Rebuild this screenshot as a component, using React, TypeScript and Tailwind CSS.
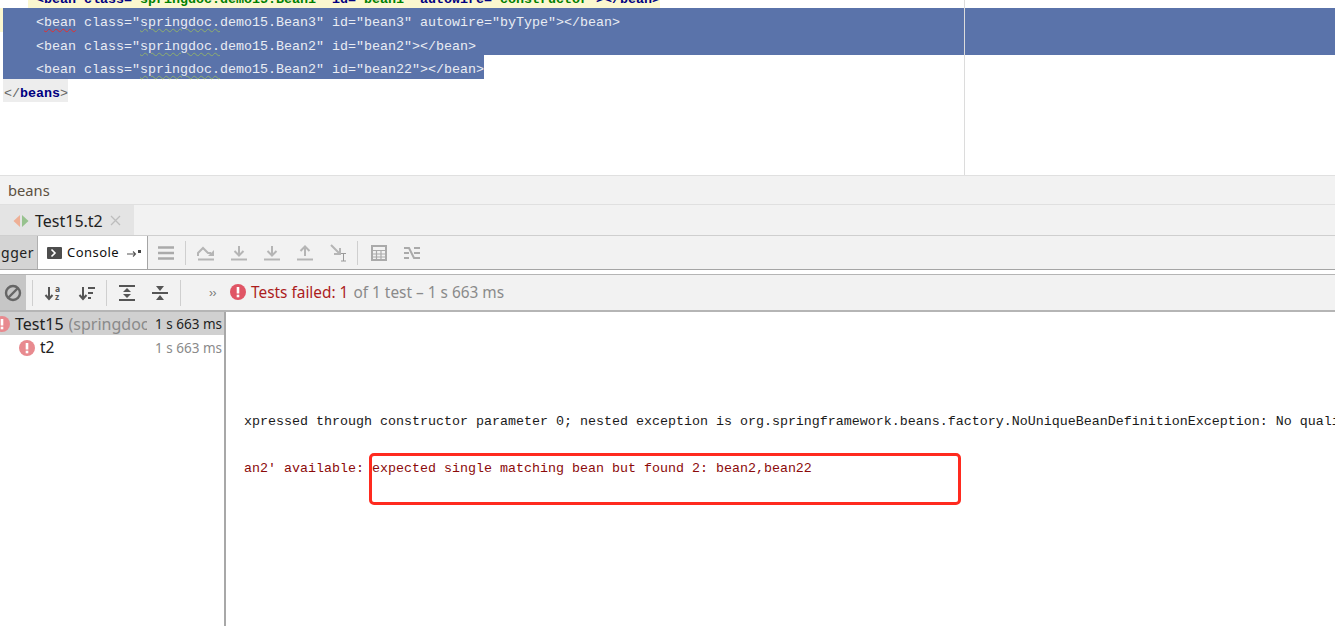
import React from "react";

const Err = ({ s = 16, c = "#e05565" }: { s?: number; c?: string }) => (
  <svg width={s} height={s} viewBox="0 0 16 16" className="shrink-0">
    <circle cx="8" cy="8" r="8" fill={c} />
    <rect x="6.7" y="3" width="2.6" height="6.5" fill="#fff" />
    <rect x="6.7" y="10.7" width="2.6" height="2.6" fill="#fff" />
  </svg>
);

const Ico = ({ children, w = 18 }: { children: React.ReactNode; w?: number }) => (
  <svg width={w} height="18" viewBox="0 0 18 18" className="shrink-0">{children}</svg>
);

const Sep = ({ h = "h-[26px]" }: { h?: string }) => <div className={`w-px bg-[#cfcfcf] shrink-0 ${h}`} />;

function SelLine({ children, full = true }: { children: React.ReactNode; full?: boolean }) {
  return (
    <div className={`h-[23.5px] leading-[29.5px] bg-[#5a73aa] text-[#e9ecf3] pl-[33px] ${full ? "ml-[3px]" : "ml-[3px] w-[481px]"}`}>
      {children}
    </div>
  );
}

const Squig = ({ children, c }: { children: React.ReactNode; c: string }) => (
  <span className="underline decoration-wavy decoration-1 underline-offset-2" style={{ textDecorationColor: c }}>{children}</span>
);

export default function App() {
  const mono = "font-['Liberation_Mono',monospace] text-[13.33px]";
  return (
    <div className="w-[1335px] h-[626px] overflow-hidden relative bg-white flex flex-col font-['Noto_Sans','Open_Sans',sans-serif]">
      {/* editor */}
      <div className={`h-[175px] shrink-0 overflow-hidden relative whitespace-pre ${mono}`}>
        <div className="-mt-[15.5px]">
          <div className="h-[23.5px] leading-[29.5px] ml-[28px] w-[632px] pl-[8px] bg-[#fbf7cf] text-[#000080] font-bold">
            {"<bean class="}<span className="text-[#008000]">"springdoc.demo15.Bean1"</span>{" id="}<span className="text-[#008000]">"bean1"</span>{" autowire="}<span className="text-[#008000]">"constructor"</span>{"></bean>"}
          </div>
          <div className="bg-[#fbf7cf]">
            <SelLine>{"<"}<Squig c="#e03030">bean</Squig>{" class=\""}<Squig c="#8fae6c">springdoc.</Squig>{"demo15.Bean3\" id=\"bean3\" autowire=\"byType\"></bean>"}</SelLine>
          </div>
          <SelLine>{"<bean class=\""}<Squig c="#8fae6c">springdoc.</Squig>{"demo15.Bean2\" id=\"bean2\"></bean>"}</SelLine>
          <SelLine full={false}>{"<bean class=\""}<Squig c="#8fae6c">springdoc.</Squig>{"demo15.Bean2\" id=\"bean22\"></bean>"}</SelLine>
          <div className="h-[23.5px] leading-[29.5px] ml-[3px] w-[65px] bg-[#ededed] text-[#000080] font-bold pl-[1px]">
            <span className="text-[#666] font-normal">{"</"}</span>beans<span className="text-[#666] font-normal">{">"}</span>
          </div>
        </div>
        <div className="absolute left-[964px] top-0 bottom-0 w-px bg-[#dcdcdc]" />
      </div>

      {/* breadcrumb */}
      <div className="h-[30px] shrink-0 bg-[#f2f2f2] border-t border-b border-[#e0e0e0] pl-[8px] flex items-center text-[14.7px] text-[#5c5040]">beans</div>

      {/* run tab */}
      <div className="h-[31px] shrink-0 bg-[#f2f2f2] border-b border-[#cfcfcf]">
        <div className="w-[134px] h-full bg-[#e4e4e4] flex items-center pl-[13px] pt-[1px] text-[16px] text-[#222]">
          <svg width="16" height="14" viewBox="0 0 16 14" className="shrink-0">
            <path d="M7 1 L0.5 7 L7 13 Z" fill="#eeaf95" />
            <path d="M9 1 L15.5 7 L9 13 Z" fill="#97c28e" />
          </svg>
          <span className="ml-[6px]">Test15.t2</span>
          <svg width="11" height="11" viewBox="0 0 11 11" className="ml-[7px]"><path d="M1 1 L10 10 M10 1 L1 10" stroke="#bdbdbd" strokeWidth="1.3" /></svg>
        </div>
      </div>

      {/* tool tabs */}
      <div className="h-[34px] shrink-0 bg-[#f2f2f2] border-b border-[#a5a5a5] flex items-stretch">
        <div className="w-[38px] bg-[#d4d4d4] border-r border-[#b0b0b0] flex items-center justify-end pr-[3px] text-[14px] text-[#222] tracking-[0.5px] overflow-hidden whitespace-nowrap">ugger</div>
        <div className="w-[110px] bg-white border-r border-[#a5a5a5] flex items-center pl-[9px] text-[13px] text-[#111] tracking-[0.45px] shrink-0">
          <svg width="15" height="12" viewBox="0 0 15 12" className="shrink-0"><rect width="15" height="12" rx="1" fill="#4d4d4d" /><path d="M4.5 2.5 L8 6 L4.5 9.5" stroke="#fff" strokeWidth="1.6" fill="none" /></svg>
          <span className="ml-[5px]">Console</span>
          <svg width="16" height="10" viewBox="0 0 16 10" className="ml-[8px]"><path d="M0 6 H8 M6 3.5 L8.5 6 L6 8.5" stroke="#555" strokeWidth="1.1" fill="none" /><rect x="11" y="2" width="3" height="3" fill="#444" /></svg>
        </div>
        <div className="flex items-center pl-[9px] gap-[10px]">
          <Ico><path d="M1 3.5 H17 M1 9 H17 M1 14.5 H17" stroke="#aaa" strokeWidth="2.4" /></Ico>
          <Sep h="h-[24px]" />
          <div className="flex items-center gap-[15px] ml-[1px]">
            <Ico><path d="M1 15.5 H17" stroke="#b5b5b5" strokeWidth="2" /><path d="M1 12 V9 L6 4 L11 9 H14" stroke="#b5b5b5" strokeWidth="2" fill="none" /><path d="M11 12 H17 V6 Z" fill="#b5b5b5" /></Ico>
            <Ico><path d="M1 15.5 H17 M9 2 V11 M4.5 7 L9 11.5 L13.5 7" stroke="#b5b5b5" strokeWidth="2" fill="none" /></Ico>
            <Ico><path d="M1 15.5 H17 M9 2 V11 M4.5 7 L9 11.5 L13.5 7" stroke="#b5b5b5" strokeWidth="2" fill="none" /></Ico>
            <Ico><path d="M1 15.5 H17 M9 12 V3 M4.5 7 L9 2.5 L13.5 7" stroke="#b5b5b5" strokeWidth="2" fill="none" /></Ico>
            <Ico><path d="M2 1 L11 10 M5 10 H11 V4" stroke="#b5b5b5" strokeWidth="2" fill="none" /><path d="M12 9.5 H17 M14.5 9.5 V17 M12 17 H17" stroke="#999" strokeWidth="1" /></Ico>
          </div>
          <Sep h="h-[24px]" />
          <div className="flex items-center gap-[15px] ml-[2px]">
            <Ico><rect x="2" y="2" width="14" height="14" fill="none" stroke="#aaa" strokeWidth="2" /><path d="M2 6.5 H16 M2 10 H16 M2 13 H16 M6.5 6 V16 M11 6 V16" stroke="#aaa" strokeWidth="1.2" /></Ico>
            <Ico><path d="M1 4 H6 L11 14 H17 M1 14 H6 M11 4 H17 M1 9 H6 M11 9 H17" stroke="#aaa" strokeWidth="2" fill="none" /></Ico>
          </div>
        </div>
      </div>

      {/* gap */}
      <div className="h-[4px] shrink-0 bg-white" />

      {/* test toolbar */}
      <div className="h-[38px] shrink-0 bg-[#f2f2f2] border-t border-[#b5b5b5] border-b-2 border-b-[#b5b5b5] flex items-center text-[15.4px]">
        <div className="w-[26px] h-full bg-[#c6c6c6] flex items-center justify-center shrink-0">
          <svg width="18" height="18" viewBox="0 0 18 18"><circle cx="9" cy="9" r="7" fill="none" stroke="#666" strokeWidth="2.4" /><path d="M4 14 L14 4" stroke="#666" strokeWidth="2.4" /></svg>
        </div>
        <div className="ml-[6px]"><Sep /></div>
        <div className="ml-[11px] flex items-center gap-[16px]">
          <Ico><path d="M5 3 V15 M1.5 11 L5 15 L8.5 11" stroke="#555" strokeWidth="2" fill="none" /><text x="11" y="8" fontSize="8.5" fill="#555" fontWeight="700">a</text><text x="11" y="16" fontSize="8.5" fill="#555" fontWeight="700">z</text></Ico>
          <Ico><path d="M5 3 V15 M1.5 11 L5 15 L8.5 11" stroke="#555" strokeWidth="2" fill="none" /><path d="M10 4 H17 M10 9 H15 M10 14 H13" stroke="#555" strokeWidth="2" /></Ico>
        </div>
        <div className="ml-[10px]"><Sep /></div>
        <div className="ml-[11px] flex items-center gap-[15px]">
          <Ico><path d="M1 2 H17 M1 16 H17" stroke="#555" strokeWidth="2" /><path d="M9 4 L13 8 H5 Z M9 14 L13 10 H5 Z" fill="#555" /></Ico>
          <Ico><path d="M1 9 H17" stroke="#555" strokeWidth="2" /><path d="M9 7 L13 2 H5 Z M9 11 L13 16 H5 Z" fill="#555" /></Ico>
        </div>
        <div className="ml-[11px]"><Sep /></div>
        <span className="ml-[28px] text-[#777] text-[12px] leading-none tracking-[-0.5px] font-['Liberation_Sans',sans-serif]">››</span>
        <div className="ml-[14px] flex items-center">
          <Err />
          <span className="ml-[5px] text-[#ac1c1c]">Tests failed: 1</span>
          <span className="ml-[5px] text-[#8a8a8a]">of 1 test – 1 s 663 ms</span>
        </div>
      </div>

      {/* body */}
      <div className="flex-1 flex min-h-0">
        <div className="w-[226px] shrink-0 border-r-2 border-[#a8a8a8] text-[16px]">
          <div className="h-[23px] bg-[#d0d0d0] flex items-center pr-[2px] pt-[1px] whitespace-nowrap overflow-hidden">
            <div className="-ml-[6px]"><Err c="#e88a8f" /></div>
            <span className="ml-[5px] text-[#222]">Test15</span>
            <span className="ml-[5px] text-[#8a8a8a] w-[78px] shrink-0 overflow-hidden">(springdoc.</span>
            <span className="ml-auto text-[#222] text-[13.5px]">1 s 663 ms</span>
          </div>
          <div className="h-[25px] flex items-center pl-[19px] pr-[2px] pt-[1px]">
            <Err c="#e88a8f" />
            <span className="ml-[5px] text-[#222] text-[15.5px]">t2</span>
            <span className="ml-auto text-[#8a8a8a] text-[13.5px]">1 s 663 ms</span>
          </div>
        </div>
        <div className={`flex-1 min-w-0 overflow-hidden whitespace-pre pl-[18px] pt-[98px] ${mono}`}>
          <div className="h-[24px] leading-[24px] text-[#1a1a1a]">xpressed through constructor parameter 0; nested exception is org.springframework.beans.factory.NoUniqueBeanDefinitionException: No qualifying</div>
          <div className="h-[23px]" />
          <div className="h-[24px] leading-[24px] text-[#8b0a0a]">an2' available: expected single matching bean but found 2: bean2,bean22</div>
        </div>
      </div>

      {/* annotation */}
      <div className="absolute left-[369px] top-[453px] w-[592px] h-[52px] border-[3px] border-[#ff2a1f] rounded-[5px]" />
    </div>
  );
}
